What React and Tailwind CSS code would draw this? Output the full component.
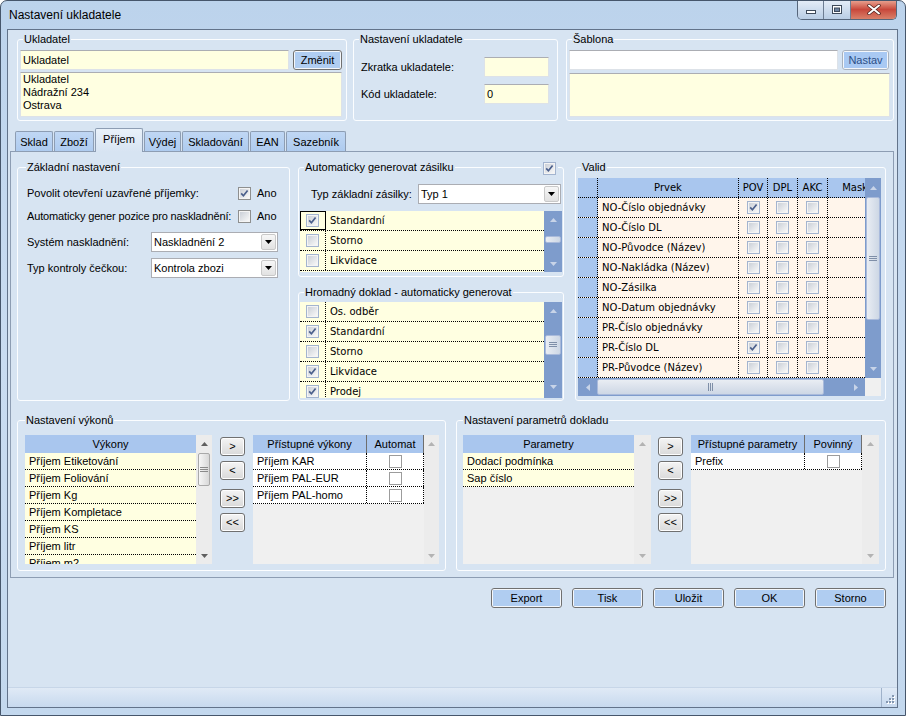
import React from "react";

const DOT = "border-dotted border-black";

function Tri({ dir = "down", color = "#000", w = 7, h = 4 }) {
  const horiz = dir === "left" || dir === "right";
  const d =
    dir === "down"
      ? `M0 0H${w}L${w / 2} ${h}Z`
      : dir === "up"
      ? `M0 ${h}H${w}L${w / 2} 0Z`
      : dir === "left"
      ? `M${h} 0V${w}L0 ${w / 2}Z`
      : `M0 0V${w}L${h} ${w / 2}Z`;
  return (
    <svg width={horiz ? h : w} height={horiz ? w : h} className="block shrink-0">
      <path d={d} fill={color} />
    </svg>
  );
}

function Defs() {
  return (
    <svg width="0" height="0" className="absolute">
      <defs>
        <linearGradient id="cbIn" x1="0" y1="0" x2="1" y2="1">
          <stop offset="0" stopColor="#cbd0d8" />
          <stop offset="1" stopColor="#f8f8f8" />
        </linearGradient>
      </defs>
    </svg>
  );
}

function CB({ checked, kind = "std" }) {
  if (kind === "flat")
    return (
      <svg width="13" height="13" className="block shrink-0">
        <rect x="0.5" y="0.5" width="12" height="12" fill="#fff" stroke="#9c9c9c" />
      </svg>
    );
  const border = kind === "grid" ? "#a3b4cf" : "#8e8f8f";
  return (
    <svg width="13" height="13" className="block shrink-0">
      <rect x="0.5" y="0.5" width="12" height="12" fill="#f4f4f4" stroke={border} />
      <rect x="2" y="2" width="9" height="9" fill="url(#cbIn)" />
      {checked && (
        <path d="M3.2 6.4 L5.4 8.8 L9.6 3.4" fill="none" stroke="#4a5f8c" strokeWidth="1.7" />
      )}
    </svg>
  );
}

function GripH({ color = "#7f8fa8" }) {
  return (
    <svg width="8" height="6" className="block">
      <path d="M0 0.5H8M0 2.5H8M0 4.5H8" stroke={color} strokeWidth="1" />
    </svg>
  );
}

function GripV({ color = "#7f8fa8" }) {
  return (
    <svg width="6" height="8" className="block">
      <path d="M0.5 0V8M2.5 0V8M4.5 0V8" stroke={color} strokeWidth="1" />
    </svg>
  );
}

function Group({ title, legend = "ml-[5px]", className = "", children, extra }) {
  return (
    <fieldset className={`relative min-w-0 rounded-[3px] border border-[#fbfdff] ${className}`}>
      <legend className={`px-[1px] text-[11px] leading-[13px] ${legend}`}>{title}</legend>
      {extra}
      {children}
    </fieldset>
  );
}

function Input({ className = "", children }) {
  return (
    <div
      className={`h-[20px] border border-[#dde2e8] border-t-[#abadb3] bg-[#ffffe1] px-[2px] flex items-center leading-[13px] ${className}`}
    >
      {children}
    </div>
  );
}

function BBtn({ children, className = "", text = "text-black" }) {
  return (
    <div className={`rounded-[3px] border border-[#707070] p-[1px] bg-[#f4f7fb] ${className}`}>
      <div className={`h-full bg-[#b0cdf1] flex items-center justify-center leading-[13px] ${text}`}>
        {children}
      </div>
    </div>
  );
}

function GBtn({ children, className = "" }) {
  return (
    <div
      className={`h-[19px] rounded-[3px] border border-[#707070] bg-linear-to-b from-[#f4f4f4] to-[#dadada] flex items-center justify-center leading-[11px] shadow-[inset_0_0_0_1px_#fdfdfd] ${className}`}
    >
      {children}
    </div>
  );
}

function Combo({ value, className = "" }) {
  return (
    <div className={`h-[20px] border border-[#abadb3] bg-white flex items-center ${className}`}>
      <span className="flex-1 pl-[2px] leading-[14px] whitespace-nowrap overflow-hidden">{value}</span>
      <div className="w-[15px] h-[16px] mr-[1px] rounded-[2px] border border-[#c9c9c9] bg-linear-to-b from-[#f7f7f7] to-[#e2e2e2] flex items-center justify-center">
        <Tri dir="down" w={7} h={4} />
      </div>
    </div>
  );
}

function BlueVScroll({ className = "", upCls = "h-[17px]", gapCls = "h-0", thumbCls = "h-[6px]", downCls = "h-[17px]", grip }) {
  return (
    <div className={`shrink-0 flex flex-col bg-[#7e9ccc] ${className}`}>
      <div className={`${upCls} shrink-0 flex items-center justify-center`}>
        <Tri dir="up" color="#c8d4e8" />
      </div>
      <div className={`${gapCls} shrink-0`} />
      <div
        className={`${thumbCls} shrink-0 mx-[1px] rounded-[2px] border border-[#a9badb] bg-linear-to-r from-[#e9edf3] to-[#cdd7e5] flex items-center justify-center`}
      >
        {grip && <GripH />}
      </div>
      <div className="flex-1" />
      <div className={`${downCls} shrink-0 flex items-center justify-center`}>
        <Tri dir="down" color="#c8d4e8" />
      </div>
    </div>
  );
}

function GrayVScroll({ className = "", thumb }) {
  const c = thumb ? "#606060" : "#b3b3b3";
  return (
    <div className={`shrink-0 flex flex-col bg-[#ececec] ${className}`}>
      <div className="h-[18px] shrink-0 flex items-center justify-center">
        <Tri dir="up" w={7} h={4} color={c} />
      </div>
      {thumb && (
        <div className="h-[33px] shrink-0 mx-[2px] rounded-[2px] border border-[#a9a9a9] bg-linear-to-r from-[#f6f6f6] to-[#d8d8d8] flex items-center justify-center">
          <GripH color="#8a8a8a" />
        </div>
      )}
      <div className="flex-1" />
      <div className="h-[16px] shrink-0 flex items-center justify-center">
        <Tri dir="down" w={7} h={4} color={c} />
      </div>
    </div>
  );
}

function CheckList({ rows, className = "", focusFirst, scroll }) {
  return (
    <div className={`flex bg-[#ffffe1] overflow-hidden ${className}`}>
      <div className="flex-1 flex flex-col font-['DejaVu_Sans',sans-serif] text-[10px]">
        {rows.map(([t, c], i) => (
          <div key={i} className={`h-[20px] shrink-0 flex border-b ${DOT}`}>
            <div
              className={`w-[26px] shrink-0 flex items-center justify-center border-r ${DOT} ${
                focusFirst && i === 0 ? "outline outline-black -outline-offset-1" : ""
              }`}
            >
              <CB checked={c} kind="grid" />
            </div>
            <div className="flex-1 pl-[4px] flex items-center leading-[12px]">{t}</div>
          </div>
        ))}
      </div>
      {scroll}
    </div>
  );
}

const validRows = [
  ["NO-Číslo objednávky", true],
  ["NO-Číslo DL", false],
  ["NO-Původce (Název)", false],
  ["NO-Nakládka (Název)", false],
  ["NO-Zásilka", false],
  ["NO-Datum objednávky", false],
  ["PR-Číslo objednávky", false],
  ["PR-Číslo DL", true],
  ["PR-Původce (Název)", false],
];

function ValidGrid() {
  const cell = `shrink-0 border-r ${DOT} flex items-center justify-center`;
  return (
    <div className="w-[303px] h-[218px] flex flex-col font-['DejaVu_Sans',sans-serif] text-[10px]">
      <div className="flex h-[200px]">
        <div className="w-[287px] overflow-hidden flex flex-col">
          <div className={`h-[20px] shrink-0 flex bg-[#a9c6ee] border-b ${DOT}`}>
            <div className={`w-[20px] ${cell}`} />
            <div className={`w-[141px] ${cell}`}>Prvek</div>
            <div className={`w-[29px] ${cell}`}>POV</div>
            <div className={`w-[30px] ${cell}`}>DPL</div>
            <div className={`w-[30px] ${cell}`}>AKC</div>
            <div className="w-[60px] shrink-0 flex items-center justify-center">Maska</div>
          </div>
          {validRows.map(([t, c], i) => (
            <div key={i} className={`h-[20px] shrink-0 flex bg-[#fff5eb] border-b ${DOT}`}>
              <div className={`w-[20px] bg-[#a9c6ee] ${cell}`} />
              <div className={`w-[141px] shrink-0 border-r ${DOT} flex items-center pl-[4px] leading-[12px]`}>{t}</div>
              <div className={`w-[29px] ${cell}`}>
                <CB checked={c} kind="grid" />
              </div>
              <div className={`w-[30px] ${cell}`}>
                <CB kind="grid" />
              </div>
              <div className={`w-[30px] ${cell}`}>
                <CB kind="grid" />
              </div>
              <div className="w-[60px] shrink-0" />
            </div>
          ))}
        </div>
        <BlueVScroll
          className="w-[16px]"
          upCls="h-[19px]"
          gapCls="h-0"
          thumbCls="h-[123px]"
          downCls="h-[18px]"
          grip
        />
      </div>
      <div className="h-[18px] flex">
        <div className="w-[287px] bg-[#7e9ccc] flex items-stretch">
          <div className="w-[19px] shrink-0 flex items-center justify-center">
            <Tri dir="left" color="#c8d4e8" />
          </div>
          <div className="w-[227px] shrink-0 my-[1px] rounded-[2px] border border-[#a9badb] bg-linear-to-b from-[#e9edf3] to-[#cdd7e5] flex items-center justify-center">
            <GripV />
          </div>
          <div className="flex-1" />
          <div className="w-[18px] shrink-0 flex items-center justify-center">
            <Tri dir="right" color="#c8d4e8" />
          </div>
        </div>
        <div className="w-[16px] bg-[#f0f0f0]" />
      </div>
    </div>
  );
}

function LeftList({ header, rows, className = "", scrollCls = "w-[16px]", thumb }) {
  return (
    <div className={`flex h-[129px] ${className}`}>
      <div className="w-[171px] shrink-0 flex flex-col overflow-hidden bg-[#f0f0f0]">
        <div className="h-[18px] shrink-0 bg-[#a9c6ee] flex items-center justify-center leading-[13px]">{header}</div>
        {rows.map((r, i) => (
          <div
            key={i}
            className={`h-[17px] shrink-0 bg-[#ffffe1] border-b ${DOT} pl-[4px] flex items-center leading-[13px]`}
          >
            {r}
          </div>
        ))}
      </div>
      <GrayVScroll className={scrollCls} thumb={thumb} />
    </div>
  );
}

function RightList({ h1, h2, rows, className = "", scrollCls = "w-[15px]" }) {
  return (
    <div className={`flex h-[129px] ${className}`}>
      <div className="w-[171px] shrink-0 flex flex-col bg-[#f0f0f0]">
        <div className="h-[18px] shrink-0 bg-[#a9c6ee] flex leading-[13px]">
          <div className="w-[114px] shrink-0 border-r border-[#6e6e6e] flex items-center justify-center">{h1}</div>
          <div className="flex-1 border-r border-[#6e6e6e] flex items-center justify-center">{h2}</div>
        </div>
        {rows.map((r, i) => (
          <div key={i} className={`h-[17px] shrink-0 flex bg-white border-b ${DOT}`}>
            <div className={`w-[114px] shrink-0 border-r ${DOT} pl-[4px] flex items-center leading-[13px]`}>{r}</div>
            <div className={`flex-1 border-r ${DOT} flex items-center justify-center`}>
              <CB kind="flat" />
            </div>
          </div>
        ))}
      </div>
      <GrayVScroll className={scrollCls} />
    </div>
  );
}

function MoveButtons({ className = "" }) {
  return (
    <div className={`w-[25px] shrink-0 pt-[2px] flex flex-col ${className}`}>
      <GBtn>&gt;</GBtn>
      <GBtn className="mt-[5px]">&lt;</GBtn>
      <GBtn className="mt-[9px]">&gt;&gt;</GBtn>
      <GBtn className="mt-[5px]">&lt;&lt;</GBtn>
    </div>
  );
}

function TitleBar() {
  return (
    <div className="h-[28px] shrink-0 flex justify-between">
      <div className="pl-[8px] pt-[7px] text-[12px] leading-[15px] text-black">Nastavení ukladatele</div>
      <div className="mr-[8px] -mt-px h-[20px] flex rounded-b-[5px] border border-t-0 border-[#56667b] overflow-hidden">
        <div className="w-[26px] border-r border-[#6d7d92] bg-linear-to-b from-[#e6eef8] to-[#b9cde4] flex items-end justify-center pb-[5px]">
          <svg width="10" height="4" className="block">
            <rect x="0.5" y="0.5" width="9" height="3" fill="#fff" stroke="#3e4a5a" />
          </svg>
        </div>
        <div className="w-[27px] border-r border-[#6d7d92] bg-linear-to-b from-[#e6eef8] to-[#b9cde4] flex items-center justify-center">
          <svg width="10" height="9" className="block">
            <rect x="0.5" y="0.5" width="9" height="8" fill="#fff" stroke="#3e4a5a" />
            <rect x="2.5" y="3" width="5" height="3.5" fill="#6f84a2" stroke="#3e4a5a" strokeWidth="1" />
          </svg>
        </div>
        <div className="w-[45px] bg-linear-to-b from-[#e9a796] via-[#c8473b] to-[#d9806a] flex items-center justify-center">
          <svg width="14" height="11" className="block">
            <path d="M2 1.5 L12 9.5 M12 1.5 L2 9.5" stroke="#4a1f1a" strokeWidth="3.4" strokeLinecap="round" />
            <path d="M2 1.5 L12 9.5 M12 1.5 L2 9.5" stroke="#ffffff" strokeWidth="2" strokeLinecap="round" />
          </svg>
        </div>
      </div>
    </div>
  );
}

const tabs = [
  ["Sklad", "w-[38px]", false],
  ["Zboží", "w-[40px]", false],
  ["Příjem", "w-[48px]", true],
  ["Výdej", "w-[37px]", false],
  ["Skladování", "w-[67px]", false],
  ["EAN", "w-[35px]", false],
  ["Sazebník", "w-[60px]", false],
];

export default function App() {
  return (
    <div className="relative w-[906px] h-[716px] overflow-hidden rounded-t-[7px] border border-[#46566b] bg-linear-to-b from-[#bcd3ec] via-[#c9dcf1] to-[#c3d8ee] flex flex-col font-['Liberation_Sans',Arial,sans-serif] text-[11px] text-black">
      <Defs />
      <TitleBar />
      <div className="ml-[6px] mr-[7px] h-[679px] shrink-0 border border-[#62738a] bg-[#d7e4f2] flex flex-col">
        {/* Top groups */}
        <div className="mt-[3px] ml-[9px] h-[88px] shrink-0 flex">
          <Group title="Ukladatel" className="w-[330px] h-[88px]">
            <div className="pl-[2px] pt-[4px]">
              <div className="flex">
                <Input className="w-[269px]">Ukladatel</Input>
                <BBtn className="ml-[4px] w-[49px] h-[20px]">Změnit</BBtn>
              </div>
              <div className="mt-[2px] w-[322px] h-[45px] border border-[#dde2e8] border-t-[#abadb3] bg-[#ffffe1] px-[2px] leading-[13px]">
                <div>Ukladatel</div>
                <div>Nádražní 234</div>
                <div>Ostrava</div>
              </div>
            </div>
          </Group>
          <Group title="Nastavení ukladatele" className="ml-[6px] w-[205px] h-[88px]">
            <div className="pl-[7px] pt-[11px]">
              <div className="flex items-center h-[20px]">
                <div className="w-[123px]">Zkratka ukladatele:</div>
                <Input className="w-[65px]" />
              </div>
              <div className="flex items-center h-[20px] mt-[7px]">
                <div className="w-[123px]">Kód ukladatele:</div>
                <Input className="w-[65px]">0</Input>
              </div>
            </div>
          </Group>
          <Group title="Šablona" className="ml-[8px] w-[328px] h-[88px]">
            <div className="pl-[2px] pt-[4px]">
              <div className="flex">
                <div className="w-[269px] h-[20px] border border-[#dde2e8] border-t-[#abadb3] bg-white" />
                <div className="ml-[4px] w-[47px] h-[20px] rounded-[3px] border border-[#a9b2be] p-[1px] bg-[#f4f7fb]">
                  <div className="h-full bg-[#a9c9f3] flex items-center justify-center text-[#2c4e86] leading-[13px]">Nastav</div>
                </div>
              </div>
              <div className="mt-[3px] w-[321px] h-[44px] border border-[#dde2e8] border-t-[#abadb3] bg-[#ffffe1]" />
            </div>
          </Group>
        </div>

        {/* Tab control */}
        <div className="mt-[7px] ml-[2px] w-[884px] shrink-0 flex flex-col">
          <div className="h-[23px] flex items-end pl-[5px] gap-[1px]">
            {tabs.map(([t, w, sel]) =>
              sel ? (
                <div
                  key={t}
                  className={`${w} relative z-10 -mb-px h-[24px] rounded-t-[2px] border border-b-0 border-[#8d9db3] bg-linear-to-b from-[#e9f1fa] to-[#d7e4f2] flex justify-center pt-[3px] leading-[14px]`}
                >
                  {t}
                </div>
              ) : (
                <div
                  key={t}
                  className={`${w} h-[20px] rounded-t-[2px] border border-b-0 border-[#8d9db3] bg-linear-to-b from-[#c0d7f4] to-[#aecbef] flex items-center justify-center leading-[14px]`}
                >
                  {t}
                </div>
              )
            )}
          </div>
          <div className="h-[427px] border border-[#8d9db3] bg-[#d7e4f2] flex flex-col">
            {/* Row A */}
            <div className="mt-[9px] ml-[6px] h-[240px] flex">
              <Group title="Základní nastavení" legend="ml-[8px]" className="w-[273px] h-[240px]">
                <div className="pl-[9px] pt-[9px]">
                  <div className="h-[20px] flex items-center">
                    <div className="w-[211px] whitespace-nowrap">Povolit otevření uzavřené příjemky:</div>
                    <CB checked />
                    <span className="ml-[6px]">Ano</span>
                  </div>
                  <div className="mt-[3px] h-[20px] flex items-center">
                    <div className="w-[211px] whitespace-nowrap tracking-[-0.15px]">Automaticky gener pozice pro naskladnění:</div>
                    <CB />
                    <span className="ml-[6px]">Ano</span>
                  </div>
                  <div className="mt-[6px] h-[20px] flex items-center">
                    <div className="w-[124px]">Systém naskladnění:</div>
                    <Combo value="Naskladnění 2" className="w-[127px]" />
                  </div>
                  <div className="mt-[6px] h-[20px] flex items-center">
                    <div className="w-[124px]">Typ kontroly čečkou:</div>
                    <Combo value="Kontrola zbozi" className="w-[127px]" />
                  </div>
                </div>
              </Group>

              <div className="ml-[8px] w-[266px] flex flex-col">
                <Group
                  title="Automaticky generovat zásilku"
                  className="w-[266px] h-[116px]"
                  extra={
                    <div className="absolute -top-[12px] right-[5px] px-[2px] bg-[#d7e4f2]">
                      <CB checked kind="grid" />
                    </div>
                  }
                >
                  <div className="pt-[10px]">
                    <div className="h-[20px] flex items-center">
                      <div className="ml-[12px] w-[107px]">Typ základní zásilky:</div>
                      <Combo value="Typ 1" className="w-[143px]" />
                    </div>
                    <CheckList
                      className="mt-[7px] ml-[1px] w-[262px] h-[61px]"
                      focusFirst
                      rows={[
                        ["Standardní", true],
                        ["Storno", false],
                        ["Likvidace", false],
                      ]}
                      scroll={
                        <BlueVScroll className="w-[18px]" gapCls="h-[8px]" thumbCls="h-[7px]" />
                      }
                    />
                  </div>
                </Group>
                <Group title="Hromadný doklad - automaticky generovat" className="mt-[9px] w-[266px] h-[115px]">
                  <div className="pt-[3px] pl-[1px]">
                    <CheckList
                      className="w-[262px] h-[96px]"
                      rows={[
                        ["Os. odběr", false],
                        ["Standardní", true],
                        ["Storno", false],
                        ["Likvidace", true],
                        ["Prodej", true],
                      ]}
                      scroll={
                        <BlueVScroll className="w-[18px]" gapCls="h-[16px]" thumbCls="h-[20px]" downCls="h-[22px]" grip />
                      }
                    />
                  </div>
                </Group>
              </div>

              <Group title="Valid" className="ml-[11px] w-[311px] h-[240px]">
                <div className="pt-[4px] pl-[2px]">
                  <ValidGrid />
                </div>
              </Group>
            </div>

            {/* Row B */}
            <div className="mt-[13px] ml-[6px] h-[157px] flex">
              <Group title="Nastavení výkonů" legend="ml-[7px]" className="w-[429px] h-[157px]">
                <div className="pt-[8px] pl-[7px] flex">
                  <LeftList
                    header="Výkony"
                    thumb
                    scrollCls="w-[16px]"
                    rows={[
                      "Příjem Etiketování",
                      "Příjem Foliování",
                      "Příjem Kg",
                      "Příjem Kompletace",
                      "Příjem KS",
                      "Příjem litr",
                      "Příjem m2",
                    ]}
                  />
                  <MoveButtons className="ml-[8px]" />
                  <RightList
                    className="ml-[8px]"
                    h1="Přístupné výkony"
                    h2="Automat"
                    scrollCls="w-[15px]"
                    rows={["Příjem KAR", "Příjem PAL-EUR", "Příjem PAL-homo"]}
                  />
                </div>
              </Group>
              <Group title="Nastavení parametrů dokladu" legend="ml-[6px]" className="ml-[10px] w-[430px] h-[157px]">
                <div className="pt-[8px] pl-[6px] flex">
                  <LeftList header="Parametry" scrollCls="w-[17px]" rows={["Dodací podmínka", "Sap číslo"]} />
                  <MoveButtons className="ml-[7px]" />
                  <RightList
                    className="ml-[8px]"
                    h1="Přístupné parametry"
                    h2="Povinný"
                    scrollCls="w-[17px]"
                    rows={["Prefix"]}
                  />
                </div>
              </Group>
            </div>
          </div>
        </div>

        {/* Bottom buttons */}
        <div className="mt-[10px] h-[20px] shrink-0 flex justify-end pr-[11px] gap-[10px]">
          {["Export", "Tisk", "Uložit", "OK", "Storno"].map((b) => (
            <BBtn key={b} className="w-[71px] h-[20px]">
              {b}
            </BBtn>
          ))}
        </div>

        <div className="flex-1" />

        {/* Status bar */}
        <div className="h-[20px] shrink-0 flex border-t border-[#c7d6e8] bg-linear-to-b from-[#e0eaf6] to-[#c7d9ee]">
          <div className="flex-1" />
          <div className="w-[16px] border-l border-[#9fb2ca] flex items-end justify-end pr-[2px] pb-[2px]">
            <svg width="10" height="10" className="block">
              <g fill="#ffffff">
                <rect x="8" y="1" width="2" height="2" />
                <rect x="5" y="4" width="2" height="2" />
                <rect x="8" y="4" width="2" height="2" />
                <rect x="2" y="7" width="2" height="2" />
                <rect x="5" y="7" width="2" height="2" />
                <rect x="8" y="7" width="2" height="2" />
              </g>
              <g fill="#8497b0">
                <rect x="7" y="0" width="2" height="2" />
                <rect x="4" y="3" width="2" height="2" />
                <rect x="7" y="3" width="2" height="2" />
                <rect x="1" y="6" width="2" height="2" />
                <rect x="4" y="6" width="2" height="2" />
                <rect x="7" y="6" width="2" height="2" />
              </g>
            </svg>
          </div>
        </div>
      </div>
    </div>
  );
}
